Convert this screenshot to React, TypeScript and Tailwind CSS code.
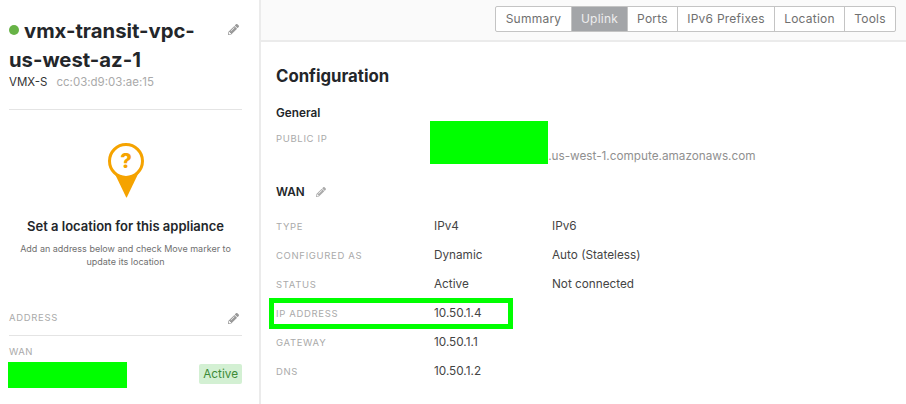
import React from 'react';
import { FaPencilAlt } from 'react-icons/fa';

const tabs = ['Summary', 'Uplink', 'Ports', 'IPv6 Prefixes', 'Location', 'Tools'];
const tabWidths = ['w-[75px]', 'w-[56px]', 'w-[50px]', 'w-[97px]', 'w-[70px]', 'w-[51px]'];

const rows = [
  ['TYPE', 'IPv4', 'IPv6'],
  ['CONFIGURED AS', 'Dynamic', 'Auto (Stateless)'],
  ['STATUS', 'Active', 'Not connected'],
  ['IP ADDRESS', '10.50.1.4', ''],
  ['GATEWAY', '10.50.1.1', ''],
  ['DNS', '10.50.1.2', ''],
];

const Pin = () => (
  <svg width="38" height="56" viewBox="0 0 38 56">
    <path d="M7 29 L19 54 Q19.5 55 20 54 L32 29 Z" fill="#f5a300" />
    <circle cx="19" cy="18" r="16.5" fill="#fff" stroke="#f5a300" strokeWidth="3" />
    <text x="19" y="25" textAnchor="middle" fontSize="20" fontWeight="800" fill="#f5a300" fontFamily="Inter, sans-serif">?</text>
  </svg>
);

const Sidebar = () => (
  <div className="w-[261px] shrink-0 h-[404px] border-r-2 border-[#ebebeb] pl-[9px] pr-[17px] pt-[16px] relative">
    <div className="flex items-start justify-between">
      <h1 className="text-[20.25px] leading-[29px] font-bold text-[#23262a] whitespace-nowrap">
        <span className="inline-block w-[10px] h-[10px] rounded-full bg-[#67b346] mr-[5px] align-[3px]"></span>
        vmx-transit-vpc-
        <br />
        us-west-az-1
      </h1>
      <FaPencilAlt className="text-[#999] w-[11px] h-[11px] mt-[8px] mr-[3px]" />
    </div>
    <div className="flex gap-[9px] text-[11.5px] leading-[14px] mt-[1px]">
      <span className="text-[#333]">VMX-S</span>
      <span className="text-[#aaa]">cc:03:d9:03:ae:15</span>
    </div>
    <div className="border-t border-[#e4e4e4] mt-[20px]"></div>

    <div className="flex flex-col items-center mt-[33px]">
      <Pin />
      <div className="text-[13px] leading-[16px] font-semibold text-[#23262a] mt-[19px] whitespace-nowrap">Set a location for this appliance</div>
      <p className="text-[9px] leading-[13px] text-[#707070] text-center mt-[8px] w-[225px]">
        Add an address below and check Move marker to update its location
      </p>
    </div>

    <div className="flex items-center justify-between mt-[43px] pb-[10px] border-b border-[#e4e4e4]">
      <span className="text-[9.5px] tracking-[0.07em] text-[#aaa]">ADDRESS</span>
      <FaPencilAlt className="text-[#999] w-[11px] h-[11px] mr-[3px]" />
    </div>
    <div className="text-[9.5px] tracking-[0.05em] text-[#aaa] mt-[9px]">WAN</div>
    <div className="flex justify-end mt-[4px]">
      <span className="text-[11.75px] leading-[20px] px-[4px] rounded-[2px] bg-[#d3f0d3] text-[#3d8b37]">Active</span>
    </div>
    <div className="absolute left-[8px] top-[362px] w-[119px] h-[26px] bg-[#00ff00]"></div>
  </div>
);

const Main = () => (
  <div className="flex-1 relative">
    <div className="h-[42px] bg-[#fafafa] border-b-2 border-[#ebebeb] flex justify-end pt-[6px] pr-[10px]">
      <div className="flex h-[26px] border border-[#c4c4c4] rounded-[2px] bg-white self-start">
        {tabs.map((t, i) => (
          <div
            key={t}
            className={`${tabWidths[i]} flex items-center justify-center text-[12px] tracking-[0.02em] ${i > 0 ? 'border-l border-[#c4c4c4]' : ''} ${t === 'Uplink' ? 'bg-[#a3a5a8] text-[#eee]' : 'text-[#707070]'}`}
          >
            {t}
          </div>
        ))}
      </div>
    </div>

    <div className="pl-[15px] pt-[24px]">
      <h2 className="text-[16.75px] leading-[20px] font-bold text-[#23262a]">Configuration</h2>
      <h3 className="text-[11.75px] leading-[14px] font-semibold text-[#23262a] mt-[20px]">General</h3>
      <div className="flex mt-[11px]">
        <div className="w-[158px] text-[9.5px] tracking-[0.07em] text-[#aaa] leading-[14px] pt-px">PUBLIC IP</div>
        <div className="text-[11.75px] text-[#909090] leading-[14px] pl-[107px] pt-[18px] whitespace-nowrap">2.us-west-1.compute.amazonaws.com</div>
      </div>
      <div className="flex items-center gap-[11px] mt-[22px]">
        <h3 className="text-[11.75px] leading-[14px] font-semibold text-[#23262a]">WAN</h3>
        <FaPencilAlt className="text-[#aaa] w-[10px] h-[10px]" />
      </div>
      <div className="grid grid-cols-[158px_118px_1fr] auto-rows-[29px] mt-[13px]">
        {rows.map(([label, a, b]) => (
          <React.Fragment key={label}>
            <div className="text-[9.5px] tracking-[0.07em] text-[#aaa] flex items-center pt-[2px]">{label}</div>
            <div className="text-[11.75px] text-[#444] flex items-center">{a}</div>
            <div className="text-[11.75px] text-[#444] flex items-center">{b}</div>
          </React.Fragment>
        ))}
      </div>
    </div>

    <div className="absolute left-[169px] top-[121px] w-[118px] h-[43px] bg-[#00ff00]"></div>
    <div className="absolute left-[8px] top-[298px] w-[244px] h-[31px] border-[5px] border-[#00ff00]"></div>
  </div>
);

export default function App() {
  return (
    <div className="flex w-[906px] h-[404px] overflow-hidden bg-white font-['Inter',sans-serif]">
      <Sidebar />
      <Main />
    </div>
  );
}
